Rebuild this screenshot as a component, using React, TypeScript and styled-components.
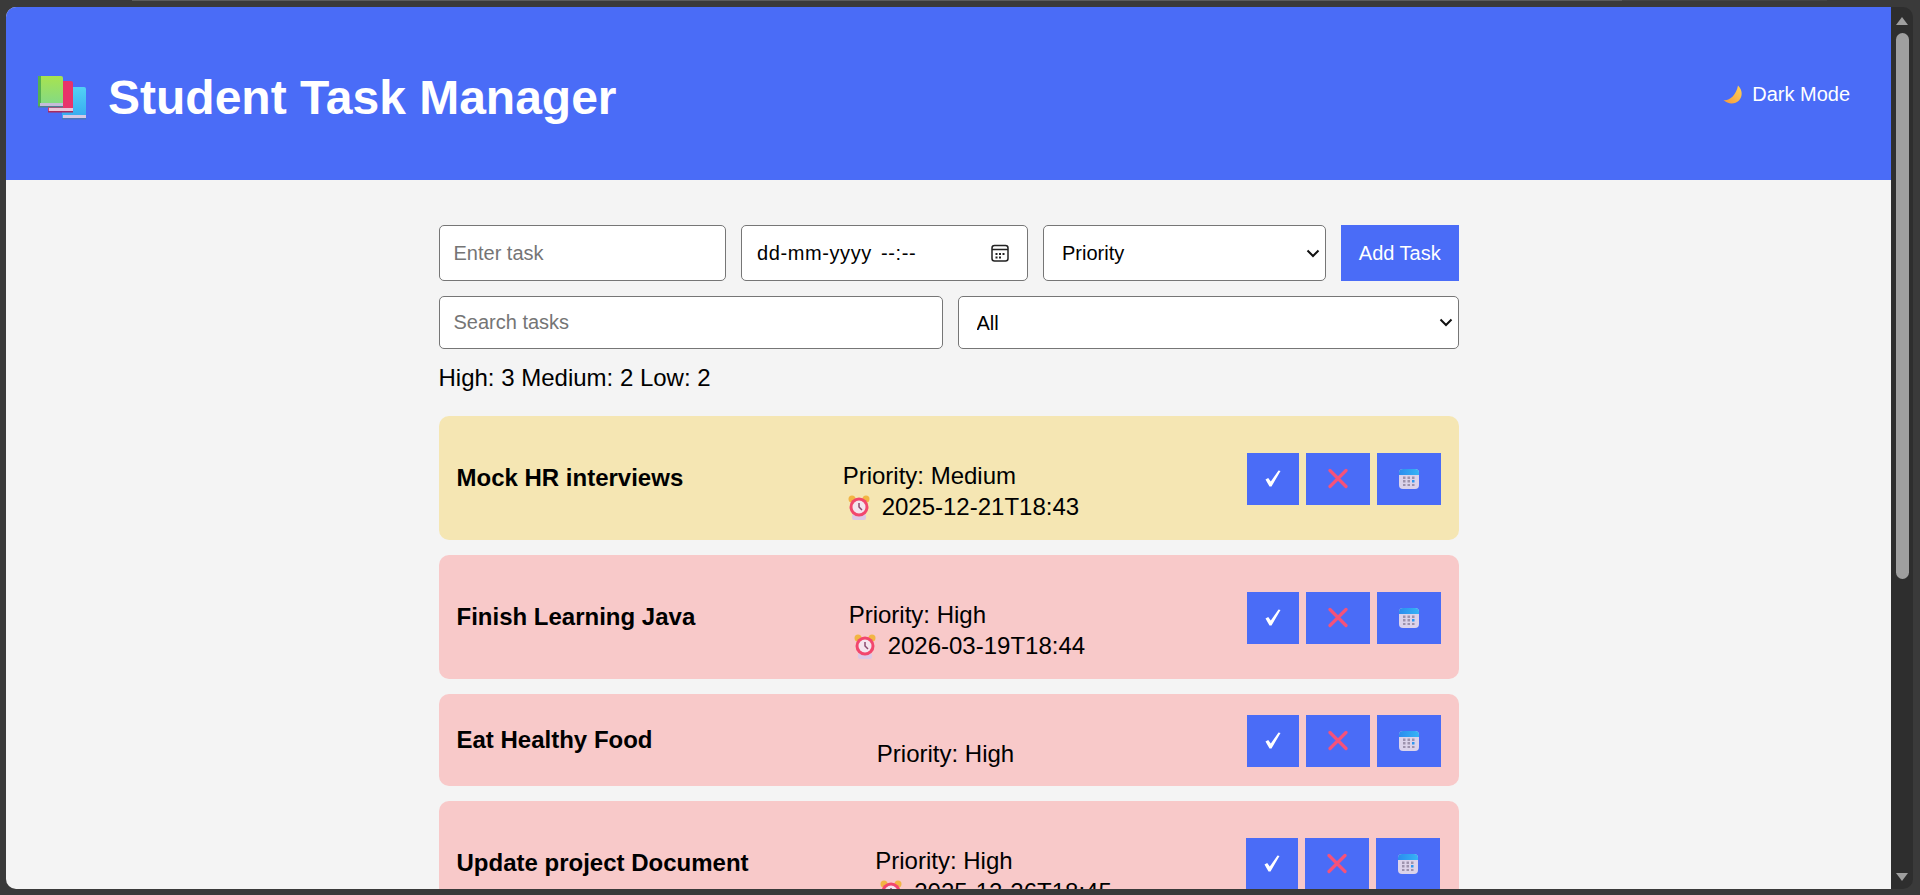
import React from "react";
import styled, { createGlobalStyle } from "styled-components";

const GlobalStyle = createGlobalStyle`
  html, body {
    margin: 0;
    height: 100%;
    overflow: hidden;
    background: #3a3a3a;
  }
  * {
    box-sizing: border-box;
  }
`;

const chevron = encodeURIComponent(
  '<svg xmlns="http://www.w3.org/2000/svg" width="14" height="9" viewBox="0 0 14 9"><path d="M1.500 1.500L7 7l5.500-5.500" fill="none" stroke="#111" stroke-width="2"/></svg>'
);

const Screen = styled.div`
  height: 100vh;
  display: flex;
  flex-direction: column;
  background: #3a3a3a;
  font-family: "Liberation Sans", Arial, sans-serif;
  color: #000;
`;

const TopEdge = styled.div`
  height: 7px;
  flex: none;
  padding: 0 93px 0 132px;
`;

const TopEdgeLine = styled.div`
  height: 1px;
  background: linear-gradient(to right, #5c5c5c 1490px, #444 1490px);
`;

const BrowserWindow = styled.div`
  flex: 1;
  min-height: 0;
  margin: 0 7px 6px 6px;
  display: flex;
  border-radius: 10px;
  overflow: hidden;
`;

const Page = styled.div`
  flex: 1;
  min-width: 0;
  overflow: hidden;
  background: #f4f4f4;
`;

const ScrollTrack = styled.div`
  width: 22px;
  flex: none;
  display: flex;
  flex-direction: column;
  align-items: center;
  padding: 10px 0 8px;
  background: #2e2e2e;
`;

const ScrollArrow = styled.div<{ $down?: boolean }>`
  width: 0;
  height: 0;
  border-left: 6px solid transparent;
  border-right: 6px solid transparent;
  ${({ $down }) =>
    $down
      ? "border-top: 8px solid #9f9f9f; margin-top: auto;"
      : "border-bottom: 8px solid #9f9f9f;"}
`;

const ScrollThumb = styled.div`
  width: 13px;
  height: 546px;
  margin-top: 8px;
  border-radius: 7px;
  background: #9f9f9f;
`;

const Header = styled.header`
  height: 173px;
  display: flex;
  justify-content: space-between;
  align-items: center;
  padding: 7px 30px 0;
  background: #4a6cf7;
  color: #fff;
`;

const Title = styled.h1`
  margin: 0;
  display: flex;
  align-items: center;
  gap: 12px;
  font-size: 48px;
  font-weight: 700;
`;

const ThemeToggle = styled.button`
  display: flex;
  align-items: center;
  gap: 9px;
  margin-bottom: 5px;
  padding: 0 11px;
  border: none;
  background: transparent;
  color: #fff;
  font: inherit;
  font-size: 20px;
`;

const Container = styled.main`
  width: 1020px;
  margin: 45px auto 0;
`;

const AddRow = styled.div`
  display: grid;
  grid-template-columns: 287.5px 287px 283px 1fr;
  gap: 15px;
  height: 56px;
`;

const FilterRow = styled.div`
  display: grid;
  grid-template-columns: 504px 1fr;
  gap: 15px;
  height: 53px;
  margin-top: 15px;
`;

const TextField = styled.input`
  width: 100%;
  height: 100%;
  padding: 0 14px;
  border: 1px solid #767676;
  border-radius: 5px;
  background: #fff;
  font-family: inherit;
  font-size: 20px;

  &::placeholder {
    color: #757575;
  }
`;

const DateField = styled.div`
  display: flex;
  align-items: center;
  justify-content: space-between;
  padding: 0 18px 0 15px;
  border: 1px solid #767676;
  border-radius: 5px;
  background: #fff;
  font-size: 20px;
`;

const DateValue = styled.span`
  letter-spacing: 0.6px;
  word-spacing: 3px;
`;

const SelectField = styled.select`
  width: 100%;
  height: 100%;
  padding: 0 30px 0 18px;
  border: 1px solid #767676;
  border-radius: 5px;
  appearance: none;
  background: #fff url("data:image/svg+xml,${chevron}") no-repeat right 5px center;
  color: #000;
  font-family: inherit;
  font-size: 20px;
`;

const AddButton = styled.button`
  border: none;
  background: #4a6cf7;
  color: #fff;
  font-family: inherit;
  font-size: 20px;
`;

const Stats = styled.p`
  margin: 15px 0 24px;
  font-size: 24px;
`;

const TaskList = styled.div`
  display: flex;
  flex-direction: column;
  gap: 15px;
`;

const TaskCard = styled.div<{ $priority: "High" | "Medium" }>`
  display: flex;
  justify-content: space-between;
  align-items: center;
  padding: 18px;
  border-radius: 10px;
  background: ${({ $priority }) =>
    $priority === "High" ? "#f8c9c9" : "#f5e6b3"};
  font-size: 24px;
`;

const TaskName = styled.strong`
  font-weight: 700;
`;

const TaskInfo = styled.div`
  padding: 28px 8px 0 0;
`;

const DueRow = styled.div`
  display: flex;
  align-items: center;
  height: 32px;
  padding: 2px 0 0 5px;
  gap: 12px;
`;

const Actions = styled.div`
  display: flex;
  flex: none;
  gap: 7px;
  margin-top: 1px;
`;

const ActionButton = styled.button<{ $wide?: boolean }>`
  width: ${({ $wide }) => ($wide ? "64px" : "52px")};
  height: 52px;
  display: flex;
  align-items: center;
  justify-content: center;
  padding: 0;
  border: none;
  background: #4a6cf7;
`;

const BooksIcon = () => (
  <svg width="60" height="60" viewBox="0 0 60 60">
    <defs>
      <linearGradient id="bookGreen" x1="0" y1="0" x2="0" y2="1">
        <stop offset="0" stopColor="#a8e34f" />
        <stop offset="1" stopColor="#7fd98a" />
      </linearGradient>
      <linearGradient id="bookBlue" x1="0" y1="0" x2="0" y2="1">
        <stop offset="0" stopColor="#52d2f5" />
        <stop offset="1" stopColor="#35a8f0" />
      </linearGradient>
    </defs>
    <g transform="translate(0 7)">
      <rect x="26" y="13" width="24" height="32" rx="2" fill="url(#bookBlue)" />
      <rect x="27" y="41" width="23" height="3" fill="#d5c9e6" />
      <rect x="26" y="44" width="24" height="1.500" fill="#4a78b8" />
      <rect x="12" y="7" width="25" height="31" rx="2" fill="#e8336a" />
      <rect x="13" y="34" width="24" height="3" fill="#ecc6da" />
      <rect x="12" y="37" width="25" height="1.500" fill="#a82a5f" />
      <rect x="2" y="2" width="25" height="31" rx="2" fill="url(#bookGreen)" />
      <rect x="2" y="2" width="3" height="31" fill="#55b052" />
      <rect x="4" y="29" width="23" height="3" fill="#c4bcd9" />
      <rect x="2" y="32" width="25" height="1.500" fill="#4f7f8f" />
    </g>
  </svg>
);

const MoonIcon = () => (
  <svg width="20" height="20" viewBox="0 0 20 20">
    <defs>
      <linearGradient id="moonFill" x1="1" y1="0" x2="0" y2="1">
        <stop offset="0" stopColor="#ffd257" />
        <stop offset="1" stopColor="#f59a3c" />
      </linearGradient>
    </defs>
    <path d="M15 .5C19.500 5 20 11 16 15.500 12 19.500 5 19.500.5 15 6 16 13 11 15 .5z" fill="url(#moonFill)" />
  </svg>
);

const ClockIcon = () => (
  <svg width="22" height="25" viewBox="0 0 22 25">
    <circle cx="4" cy="4" r="3.500" fill="#f2b544" />
    <circle cx="18" cy="4" r="3.500" fill="#f2b544" />
    <rect x="4" y="19" width="14" height="6" rx="2" fill="#dcc8e6" />
    <circle cx="11" cy="12" r="9.500" fill="#f2476d" />
    <circle cx="11" cy="12" r="6.500" fill="#f4e4ee" />
    <path d="M11 8v4l3 3" stroke="#8a4a70" strokeWidth="1.500" fill="none" />
  </svg>
);

const CheckIcon = () => (
  <svg width="16" height="17" viewBox="0 0 16 17">
    <path d="M0.500 9.500L3.200 8 5.800 11.500 13.500 0.500 15.500 1 6.500 16.500H4.500z" fill="#fff" />
  </svg>
);

const CrossIcon = () => (
  <svg width="20" height="21" viewBox="0 0 20 21">
    <path d="M2 2.500l16 16M18 2.500l-16 16" stroke="#f5527a" strokeWidth="3.200" strokeLinecap="round" />
  </svg>
);

const CalendarIcon = () => (
  <svg width="20" height="20" viewBox="0 0 20 20">
    <defs>
      <linearGradient id="calTop" x1="0" y1="0" x2="1" y2="0">
        <stop offset="0" stopColor="#2b8cee" />
        <stop offset="1" stopColor="#35b4f5" />
      </linearGradient>
    </defs>
    <rect width="20" height="20" rx="4" fill="#dcd3ea" />
    <path d="M0 6V4a4 4 0 0 1 4-4h12a4 4 0 0 1 4 4v2z" fill="url(#calTop)" />
    <g fill="#9e93ad">
      <rect x="4" y="7.500" width="2.500" height="2.500" />
      <rect x="8.500" y="7.500" width="2.500" height="2.500" />
      <rect x="13" y="7.500" width="2.500" height="2.500" />
      <rect x="4" y="11" width="2.500" height="2.500" />
      <rect x="8.500" y="11" width="2.500" height="2.500" />
      <rect x="13" y="11" width="2.500" height="2.500" fill="#2f97f0" />
      <rect x="4" y="15" width="2.500" height="2" />
      <rect x="8.500" y="15" width="2.500" height="2" />
      <rect x="13" y="15" width="2.500" height="2" />
    </g>
  </svg>
);

const PickerIcon = () => (
  <svg width="18" height="18" viewBox="0 0 18 18">
    <rect x="1" y="1.500" width="16" height="15.500" rx="2.500" fill="none" stroke="#222" strokeWidth="1.500" />
    <path d="M1 5.500h16" stroke="#222" strokeWidth="1.500" />
    <path d="M4.500 9h2v2h-2zM8 9h2v2H8zM11.500 9h2v2h-2zM4.500 12.500h2v2h-2zM8 12.500h2v2H8z" fill="#222" />
  </svg>
);

type Task = {
  name: string;
  priority: "High" | "Medium";
  due?: string;
};

const tasks: Task[] = [
  { name: "Mock HR interviews", priority: "Medium", due: "2025-12-21T18:43" },
  { name: "Finish Learning Java", priority: "High", due: "2026-03-19T18:44" },
  { name: "Eat Healthy Food", priority: "High" },
  { name: "Update project Document", priority: "High", due: "2025-12-26T18:45" },
];

const App = () => (
  <Screen>
    <GlobalStyle />
    <TopEdge>
      <TopEdgeLine />
    </TopEdge>
    <BrowserWindow>
      <Page>
        <Header>
          <Title>
            <BooksIcon />
            Student Task Manager
          </Title>
          <ThemeToggle>
            <MoonIcon />
            Dark Mode
          </ThemeToggle>
        </Header>
        <Container>
          <AddRow>
            <TextField placeholder="Enter task" />
            <DateField>
              <DateValue>dd-mm-yyyy --:--</DateValue>
              <PickerIcon />
            </DateField>
            <SelectField defaultValue="Priority">
              <option>Priority</option>
              <option>High</option>
              <option>Medium</option>
              <option>Low</option>
            </SelectField>
            <AddButton>Add Task</AddButton>
          </AddRow>
          <FilterRow>
            <TextField placeholder="Search tasks" />
            <SelectField defaultValue="All">
              <option>All</option>
              <option>High</option>
              <option>Medium</option>
              <option>Low</option>
            </SelectField>
          </FilterRow>
          <Stats>High: 3 Medium: 2 Low: 2</Stats>
          <TaskList>
            {tasks.map((task) => (
              <TaskCard key={task.name} $priority={task.priority}>
                <TaskName>{task.name}</TaskName>
                <TaskInfo>
                  <div>Priority: {task.priority}</div>
                  {task.due && (
                    <DueRow>
                      <ClockIcon />
                      {task.due}
                    </DueRow>
                  )}
                </TaskInfo>
                <Actions>
                  <ActionButton>
                    <CheckIcon />
                  </ActionButton>
                  <ActionButton $wide>
                    <CrossIcon />
                  </ActionButton>
                  <ActionButton $wide>
                    <CalendarIcon />
                  </ActionButton>
                </Actions>
              </TaskCard>
            ))}
          </TaskList>
        </Container>
      </Page>
      <ScrollTrack>
        <ScrollArrow />
        <ScrollThumb />
        <ScrollArrow $down />
      </ScrollTrack>
    </BrowserWindow>
  </Screen>
);

export default App;
